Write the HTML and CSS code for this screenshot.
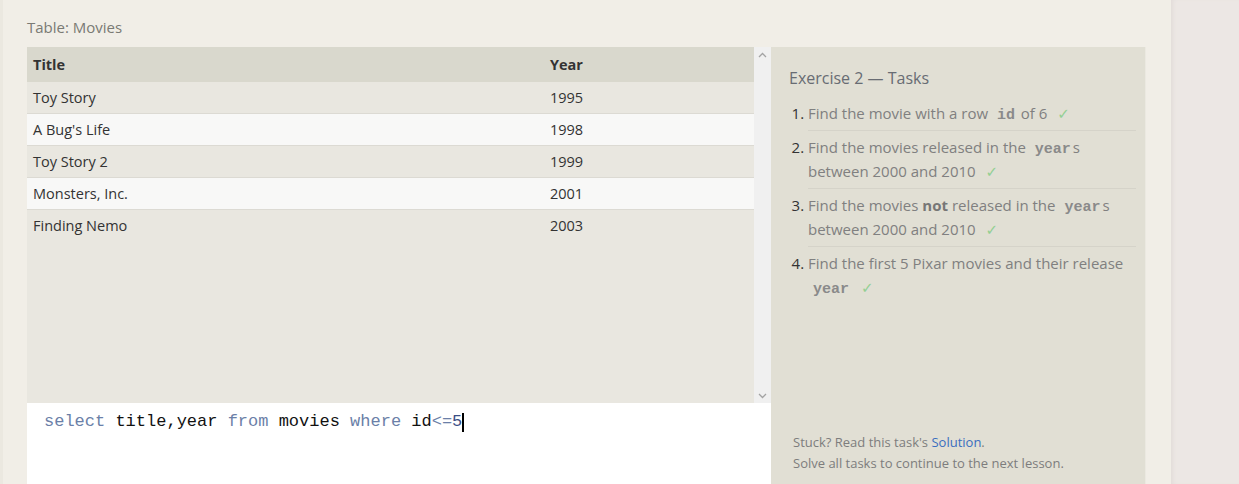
FILE: index.html
```html
<!DOCTYPE html>
<html>
<head>
<meta charset="utf-8">
<link rel="stylesheet" href="styles.css">
</head>
<body>
<div class="shell">
  <div class="page">
    <div class="label">Table: Movies</div>
    <div class="workspace">
      <div class="left">
        <div class="results">
          <div class="table-wrap">
            <table class="tbl">
              <thead>
                <tr><th class="c1">Title</th><th>Year</th></tr>
              </thead>
              <tbody>
                <tr><td class="c1">Toy Story</td><td>1995</td></tr>
                <tr><td class="c1">A Bug's Life</td><td>1998</td></tr>
                <tr><td class="c1">Toy Story 2</td><td>1999</td></tr>
                <tr><td class="c1">Monsters, Inc.</td><td>2001</td></tr>
                <tr><td class="c1">Finding Nemo</td><td>2003</td></tr>
              </tbody>
            </table>
          </div>
          <div class="scrollbar">
            <svg class="arrow" width="9" height="6" viewBox="0 0 9 6"><path d="M1 5 L4.5 1.5 L8 5" fill="none" stroke="#a3a3a3" stroke-width="1.3"/></svg>
            <svg class="arrow" width="9" height="6" viewBox="0 0 9 6"><path d="M1 1 L4.5 4.5 L8 1" fill="none" stroke="#a3a3a3" stroke-width="1.3"/></svg>
          </div>
        </div>
        <div class="editor">
          <div class="code"><span class="kw">select</span> title,year <span class="kw">from</span> movies <span class="kw">where</span> id<span class="op">&lt;=</span><span class="num">5</span><span class="cursor"></span></div>
        </div>
      </div>
      <div class="tasks">
        <h3 class="tasks-title">Exercise 2 — Tasks</h3>
        <ol class="task-list">
          <li><span class="t">Find the movie with a row <code>id</code> of 6 <span class="check">✓</span></span></li>
          <li><span class="t">Find the movies released in the <code>year</code>s between 2000 and 2010 <span class="check">✓</span></span></li>
          <li><span class="t">Find the movies <b>not</b> released in the <code>year</code>s between 2000 and 2010 <span class="check">✓</span></span></li>
          <li class="last"><span class="t">Find the first 5 Pixar movies and their release <code>year</code> <span class="check">✓</span></span></li>
        </ol>
        <div class="footer">
          <div>Stuck? Read this task's <a class="link">Solution</a>.</div>
          <div>Solve all tasks to continue to the next lesson.</div>
        </div>
      </div>
    </div>
  </div>
  <div class="side"></div>
</div>
</body>
</html>
```
FILE: styles.css
```css
html, body {
  margin: 0;
  padding: 0;
  height: 100%;
  overflow: hidden;
}
body {
  font-family: "Open Sans", "Noto Sans", sans-serif;
  background: #ece7e4;
}
.shell {
  display: flex;
  height: 484px;
  overflow: hidden;
}
.page {
  width: 1171px;
  flex: none;
  background: #f1eee7;
  padding: 15px 0 0 27px;
  box-sizing: border-box;
  border-left: 3px solid #ebe8e0;
}
.side {
  flex: 1;
  background: #ece7e4;
  box-shadow: inset 4px 0 4px -2px #e2dcd9;
}
.label {
  font-size: 15px;
  color: #7a7a74;
  line-height: 24px;
  margin-left: -3px;
  margin-bottom: 8px;
}
.workspace {
  display: flex;
  margin-left: -3px;
  width: 1118px;
}
.left {
  width: 744px;
  flex: none;
  display: flex;
  flex-direction: column;
}
.results {
  display: flex;
  height: 356px;
}
.table-wrap {
  flex: 1;
  background: #e9e7e0;
}
.tbl {
  width: 100%;
  border-collapse: collapse;
  font-size: 14.5px;
  color: #333;
}
.tbl th {
  background: #d9d8cd;
  text-align: left;
  font-weight: 700;
  height: 35px;
  padding: 0 6px;
  box-sizing: border-box;
}
.tbl td {
  height: 31px;
  padding: 0 6px;
  border-bottom: 1px solid #dcdad3;
}
.tbl .c1 {
  width: 505px;
}
.tbl tbody tr:nth-child(odd) td {
  background: #e9e7e0;
}
.tbl tbody tr:nth-child(even) td {
  background: #f8f8f7;
}
.tbl tbody tr:last-child td {
  border-bottom: none;
}
.scrollbar {
  width: 17px;
  background: #f0f0f0;
  display: flex;
  flex-direction: column;
  justify-content: space-between;
  align-items: center;
  padding: 5px 0 4px;
  box-sizing: border-box;
}
.editor {
  background: #fff;
  flex: 1;
  height: 90px;
  padding: 9px 0 0 17px;
}
.code {
  font-family: "Liberation Mono", "Courier New", monospace;
  font-size: 17px;
  line-height: 20px;
  color: #111;
  display: flex;
  align-items: center;
  white-space: pre;
}
.kw { color: #6b7fa8; }
.op { color: #6b7fa8; }
.num { color: #3b4f86; }
.cursor {
  display: inline-block;
  width: 2px;
  height: 19px;
  background: #000;
}
.tasks {
  width: 374px;
  flex: none;
  background: #e1dfd4;
  box-sizing: border-box;
  padding: 18px 9px 0 18px;
  display: flex;
  flex-direction: column;
  height: 437px;
  box-shadow: 1px 0 0 #ebe9e1;
}
.tasks-title {
  font-weight: 400;
  font-size: 16px;
  color: #686c73;
  margin: 0 0 6px 0;
  line-height: 26px;
}
.task-list {
  margin: 0;
  padding: 0 0 0 19px;
  font-size: 15px;
  color: #333;
}
.task-list li {
  line-height: 24.5px;
  padding: 4px 0 4px;
  border-bottom: 1px solid #d5d3c9;
}
.task-list li.last {
  border-bottom: none;
}
.task-list .t {
  color: #808080;
}
.task-list code {
  font-family: "Liberation Mono", "Courier New", monospace;
  font-weight: 700;
  font-size: 15px;
  line-height: 0;
  color: #8a8a8a;
  padding: 0 2px 0 5px;
}
.task-list b {
  color: #777;
}
.check {
  color: #93cf93;
  margin-left: 6px;
  font-family: "DejaVu Sans", sans-serif;
  font-size: 15px;
  line-height: 0;
}
.footer {
  margin-top: auto;
  margin-bottom: 10px;
  padding-left: 4px;
  font-size: 13px;
  line-height: 21px;
  color: #7d7d7d;
}
.link {
  color: #3a6ebf;
}
```
